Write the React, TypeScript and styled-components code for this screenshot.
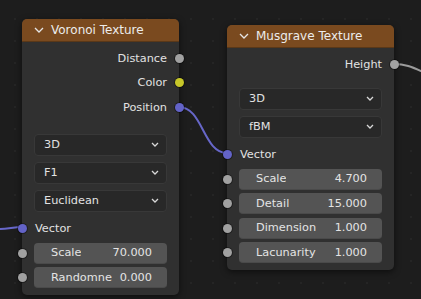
import styled, { createGlobalStyle } from 'styled-components';
import { ReactNode } from 'react';

const GlobalStyle = createGlobalStyle`
  html, body {
    margin: 0;
    padding: 0;
    background: #1d1d1d;
    overflow: hidden;
  }
  * {
    box-sizing: border-box;
  }
`;

type SocketKind = 'float' | 'color' | 'vector';

const socketColor: Record<SocketKind, string> = {
  float: '#a1a1a1',
  color: '#c7c729',
  vector: '#6363c7',
};

interface NodeProps {
  title: string;
  x: number;
  y: number;
  width: number;
  children: ReactNode;
}

const Node = ({ title, x, y, width, children }: NodeProps) => (
  <S.Node style={{ left: x, top: y, width }}>
    <S.Header>
      <S.Chevron viewBox="0 0 10 6">
        <path d="M1 1 L5 5 L9 1" />
      </S.Chevron>
      {title}
    </S.Header>
    <S.Body>{children}</S.Body>
  </S.Node>
);

const Output = ({ label, kind }: { label: string; kind: SocketKind }) => (
  <S.OutputRow>
    {label}
    <S.Socket side="right" color={socketColor[kind]} />
  </S.OutputRow>
);

const Input = ({ label, kind }: { label: string; kind: SocketKind }) => (
  <S.InputRow>
    <S.Socket side="left" color={socketColor[kind]} />
    {label}
  </S.InputRow>
);

const Field = ({ label, value }: { label: string; value: string }) => (
  <S.FieldRow>
    <S.Socket side="left" color={socketColor.float} />
    <S.Field>
      <S.FieldLabel>{label}</S.FieldLabel>
      <span>{value}</span>
    </S.Field>
  </S.FieldRow>
);

const Dropdown = ({ value }: { value: string }) => (
  <S.Dropdown>
    {value}
    <S.DropArrow viewBox="0 0 8 5">
      <path d="M1 1 L4 4 L7 1" />
    </S.DropArrow>
  </S.Dropdown>
);

const App = () => (
  <>
    <GlobalStyle />
    <S.Canvas>
      <S.Links viewBox="0 0 421 299">
        <path d="M0 229 C8 229 14 227 22 227" stroke="#6767c9" />
        <path d="M179 107 C203 107 203 153 227 153" stroke="#6767c9" />
        <path d="M394 64 C405 64 412 67 421 71" stroke="#9c9c9c" />
      </S.Links>

      <Node title="Voronoi Texture" x={22} y={19} width={157}>
        <S.Outputs>
          <Output label="Distance" kind="float" />
          <Output label="Color" kind="color" />
          <Output label="Position" kind="vector" />
        </S.Outputs>
        <S.Menus gap={14}>
          <Dropdown value="3D" />
          <Dropdown value="F1" />
          <Dropdown value="Euclidean" />
        </S.Menus>
        <Input label="Vector" kind="vector" />
        <S.Fields>
          <Field label="Scale" value="70.000" />
          <Field label="Randomne" value="0.000" />
        </S.Fields>
      </Node>

      <Node title="Musgrave Texture" x={227} y={25} width={167}>
        <S.Outputs>
          <Output label="Height" kind="float" />
        </S.Outputs>
        <S.Menus gap={11}>
          <Dropdown value="3D" />
          <Dropdown value="fBM" />
        </S.Menus>
        <Input label="Vector" kind="vector" />
        <S.Fields>
          <Field label="Scale" value="4.700" />
          <Field label="Detail" value="15.000" />
          <Field label="Dimension" value="1.000" />
          <Field label="Lacunarity" value="1.000" />
        </S.Fields>
      </Node>
    </S.Canvas>
  </>
);

const S = {
  Canvas: styled.div`
    position: relative;
    width: 421px;
    height: 299px;
    overflow: hidden;
    background-color: #1d1d1d;
    background-image: radial-gradient(circle, #252525 1px, transparent 1.4px);
    background-size: 22px 22px;
    background-position: 4px 8px;
    font-family: 'DejaVu Sans', sans-serif;
    font-size: 11.3px;
    color: #e2e2e2;
  `,

  Links: styled.svg`
    position: absolute;
    inset: 0;
    width: 421px;
    height: 299px;
    fill: none;
    stroke-width: 2;
    stroke-linecap: round;
  `,

  Node: styled.div`
    position: absolute;
    display: flex;
    flex-direction: column;
    border-radius: 5px;
    background: #303030;
    box-shadow: 0 2px 6px rgba(0, 0, 0, 0.55);
  `,

  Header: styled.div`
    display: flex;
    align-items: center;
    gap: 7px;
    height: 23px;
    padding-left: 12px;
    border-radius: 5px 5px 0 0;
    background: #7a4a1f;
    border-bottom: 1px solid #5a3818;
    font-size: 12px;
    color: #ececec;
  `,

  Chevron: styled.svg`
    width: 10px;
    height: 6px;
    fill: none;
    stroke: #e6e6e6;
    stroke-width: 1.3;
  `,

  Body: styled.div`
    display: flex;
    flex-direction: column;
    padding: 4px 12px 7px 12px;
  `,

  Outputs: styled.div`
    display: flex;
    flex-direction: column;
  `,

  OutputRow: styled.div`
    position: relative;
    display: flex;
    align-items: center;
    justify-content: flex-end;
    height: 24.5px;
  `,

  InputRow: styled.div`
    position: relative;
    display: flex;
    align-items: center;
    height: 24px;
    margin-top: 5px;
    padding-left: 1px;
  `,

  Socket: styled.span<{ side: 'left' | 'right'; color: string }>`
    position: absolute;
    top: 50%;
    ${({ side }) => (side === 'left' ? 'left: -16.5px;' : 'right: -16.5px;')}
    width: 9px;
    height: 9px;
    margin-top: -4.5px;
    border-radius: 50%;
    background: ${({ color }) => color};
    box-shadow: 0 0 0 1px rgba(0, 0, 0, 0.35);
  `,

  Menus: styled.div<{ gap: number }>`
    display: flex;
    flex-direction: column;
    gap: 6px;
    margin-top: ${({ gap }) => gap}px;
  `,

  Dropdown: styled.div`
    display: flex;
    align-items: center;
    justify-content: space-between;
    height: 22px;
    padding: 0 7px 0 9px;
    border-radius: 4px;
    background: #282828;
    border: 1px solid #383838;
    color: #e2e2e2;
  `,

  DropArrow: styled.svg`
    width: 8px;
    height: 5px;
    fill: none;
    stroke: #d8d8d8;
    stroke-width: 1.3;
  `,

  Fields: styled.div`
    display: flex;
    flex-direction: column;
    gap: 3.5px;
    margin-top: 2px;
  `,

  FieldRow: styled.div`
    position: relative;
    display: flex;
  `,

  Field: styled.div`
    display: flex;
    align-items: center;
    justify-content: space-between;
    width: 100%;
    height: 21px;
    padding: 0 15px 0 17px;
    border-radius: 4px;
    background: #545454;
    border-bottom: 1px solid #4a4a4a;
    color: #e4e4e4;
    white-space: nowrap;
  `,

  FieldLabel: styled.span`
    overflow: hidden;
  `,
};

export default App;
